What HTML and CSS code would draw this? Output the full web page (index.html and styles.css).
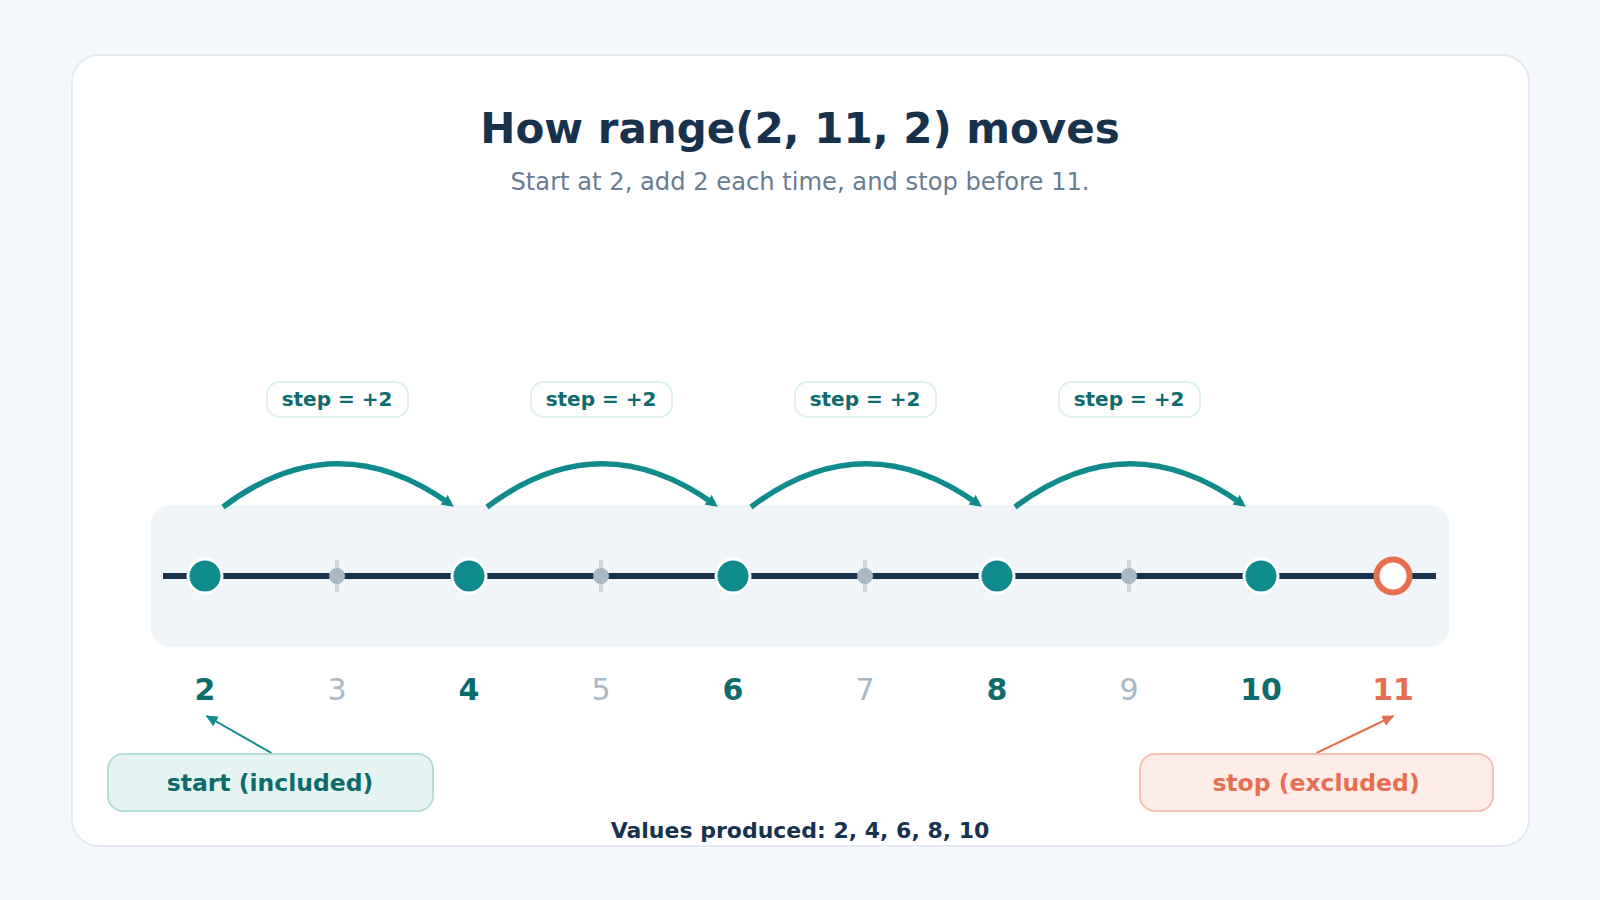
FILE: index.html
```html
<!DOCTYPE html>
<html lang="en">
<head>
<meta charset="utf-8">
<title>How range(2, 11, 2) moves</title>
<link rel="stylesheet" href="styles.css">
</head>
<body>
<main class="card">
  <header class="head">
    <h1 class="title">How range(2, 11, 2) moves</h1>
    <p class="subtitle">Start at 2, add 2 each time, and stop before 11.</p>
  </header>

  <section class="diagram">
    <div class="steps">
      <span class="pill">step = +2</span>
      <span class="pill">step = +2</span>
      <span class="pill">step = +2</span>
      <span class="pill">step = +2</span>
    </div>

    <svg class="track" width="1320" height="229" viewBox="0 0 1320 229" aria-label="Number line from 2 to 11">
      <defs>
        <marker id="hop-head" viewBox="0 0 10 10" refX="6" refY="5" markerWidth="12" markerHeight="12" markerUnits="userSpaceOnUse" orient="auto">
          <path d="M0 0 L10 5 L0 10 Z" fill="#0f8b8d"/>
        </marker>
      </defs>
      <rect class="band" x="12" y="87" width="1298" height="142" rx="20"/>
      <g class="hops">
        <path d="M84 89 Q197 4 311 86" marker-end="url(#hop-head)"/>
        <path d="M348 89 Q461 4 575 86" marker-end="url(#hop-head)"/>
        <path d="M612 89 Q725 4 839 86" marker-end="url(#hop-head)"/>
        <path d="M876 89 Q989 4 1103 86" marker-end="url(#hop-head)"/>
      </g>
      <line class="axis" x1="24" y1="158" x2="1297" y2="158"/>
      <g class="ticks">
        <line x1="198" y1="142" x2="198" y2="174"/>
        <line x1="462" y1="142" x2="462" y2="174"/>
        <line x1="726" y1="142" x2="726" y2="174"/>
        <line x1="990" y1="142" x2="990" y2="174"/>
      </g>
      <g class="skips">
        <circle cx="198" cy="158" r="8"/>
        <circle cx="462" cy="158" r="8"/>
        <circle cx="726" cy="158" r="8"/>
        <circle cx="990" cy="158" r="8"/>
      </g>
      <g class="hits">
        <circle cx="66" cy="158" r="17"/>
        <circle cx="330" cy="158" r="17"/>
        <circle cx="594" cy="158" r="17"/>
        <circle cx="858" cy="158" r="17"/>
        <circle cx="1122" cy="158" r="17"/>
      </g>
      <circle class="end" cx="1254" cy="158" r="16.5"/>
    </svg>

    <div class="numbers">
      <span class="num in">2</span>
      <span class="num skip">3</span>
      <span class="num in">4</span>
      <span class="num skip">5</span>
      <span class="num in">6</span>
      <span class="num skip">7</span>
      <span class="num in">8</span>
      <span class="num skip">9</span>
      <span class="num in">10</span>
      <span class="num stop">11</span>
    </div>
  </section>

  <section class="callouts">
    <svg class="leaders" viewBox="0 0 1455 45" preserveAspectRatio="none">
      <defs>
        <marker id="tip-teal" viewBox="0 0 12 11" refX="11" refY="5.5" markerWidth="12" markerHeight="11" markerUnits="userSpaceOnUse" orient="auto">
          <path d="M0 0 L12 5.5 L0 11 Z" fill="#0f8b8d"/>
        </marker>
        <marker id="tip-coral" viewBox="0 0 12 11" refX="11" refY="5.5" markerWidth="12" markerHeight="11" markerUnits="userSpaceOnUse" orient="auto">
          <path d="M0 0 L12 5.5 L0 11 Z" fill="#e76f51"/>
        </marker>
      </defs>
      <line class="lead-start" x1="198.5" y1="45" x2="133.5" y2="8" marker-end="url(#tip-teal)"/>
      <line class="lead-stop" x1="1243.5" y1="45" x2="1320.5" y2="8" marker-end="url(#tip-coral)"/>
    </svg>
    <div class="boxes">
      <div class="box start">start (included)</div>
      <div class="box stop">stop (excluded)</div>
    </div>
  </section>

  <p class="values">Values produced: 2, 4, 6, 8, 10</p>
</main>
</body>
</html>
```

FILE: styles.css
```css
* {
  box-sizing: border-box;
}

html,
body {
  margin: 0;
  padding: 0;
}

body {
  width: 1600px;
  height: 900px;
  overflow: hidden;
  background: #f5f9fc;
  font-family: "DejaVu Sans", "Liberation Sans", sans-serif;
}

.card {
  width: 1459px;
  height: 793px;
  margin: 54px auto 0;
  padding-top: 48px;
  background: #ffffff;
  border: 2px solid #e3eaf1;
  border-radius: 28px;
}

.head {
  text-align: center;
}

.title {
  margin: 0;
  font-size: 42px;
  line-height: 50px;
  font-weight: 700;
  color: #17324d;
}

.subtitle {
  margin: 13px 0 0;
  font-size: 24.2px;
  line-height: 30px;
  color: #687d91;
}

.diagram {
  width: 1320px;
  margin: 184px 0 0 66.5px;
}

.steps {
  display: grid;
  grid-template-columns: repeat(4, 264px);
  padding-left: 66px;
  justify-items: center;
}

.pill {
  width: 143px;
  height: 37px;
  background: #ffffff;
  border: 2px solid #e0f1f1;
  border-radius: 14px;
  color: #0d6b6b;
  font-size: 20px;
  font-weight: 700;
  line-height: 33px;
  text-align: center;
}

.track {
  display: block;
}

.band {
  fill: #eff5f8;
}

.hops path {
  fill: none;
  stroke: #0f8b8d;
  stroke-width: 5.5;
}

.axis {
  stroke: #17324d;
  stroke-width: 6;
}

.ticks line {
  stroke: #cbd6df;
  stroke-width: 4;
}

.skips circle {
  fill: #a9b8c5;
}

.hits circle {
  fill: #0f8b8d;
  stroke: #ffffff;
  stroke-width: 3;
}

.end {
  fill: #ffffff;
  stroke: #e76f51;
  stroke-width: 6;
}

.numbers {
  display: grid;
  grid-template-columns: repeat(10, 132px);
  margin-top: 25px;
  font-size: 30px;
  line-height: 36px;
  text-align: center;
}

.num.in {
  color: #0d6b6b;
  font-weight: 700;
}

.num.skip {
  color: #a9b8c5;
}

.num.stop {
  color: #e76f51;
  font-weight: 700;
}

.leaders {
  display: block;
  width: 100%;
  height: 45px;
}

.lead-start {
  stroke: #0f8b8d;
  stroke-width: 2;
}

.lead-stop {
  stroke: #e76f51;
  stroke-width: 2;
}

.boxes {
  display: flex;
  justify-content: space-between;
  padding: 0 34px;
}

.box {
  height: 59px;
  border: 2px solid;
  border-radius: 16px;
  font-size: 23.5px;
  font-weight: 700;
  line-height: 57px;
  text-align: center;
}

.box.start {
  width: 327px;
  background: #e5f4f3;
  border-color: #b3ddd9;
  color: #0d6b6b;
}

.box.stop {
  width: 355px;
  background: #fdece8;
  border-color: #f4c2b4;
  color: #e76f51;
}

.values {
  margin: 6px 0 0;
  font-size: 22px;
  line-height: 26px;
  font-weight: 700;
  color: #17324d;
  text-align: center;
}
```
